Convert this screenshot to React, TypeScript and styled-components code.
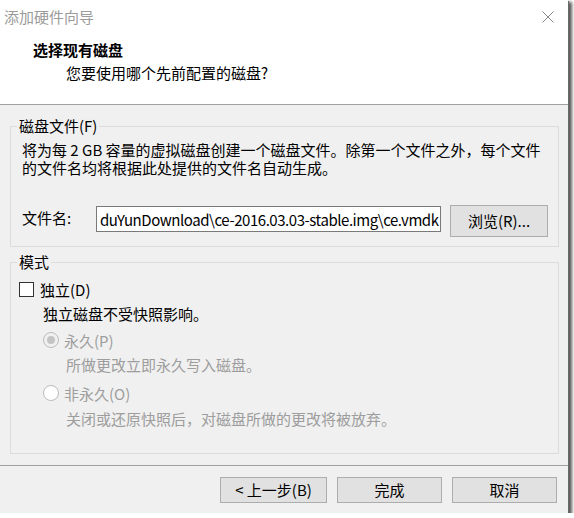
import styled, { createGlobalStyle } from "styled-components";

const GlobalStyle = createGlobalStyle`
    html, body {
        margin: 0;
        padding: 0;
        background: #ffffff;
    }
    body {
        font-family: "Noto Sans CJK SC", "Noto Sans", sans-serif;
        font-size: 15px;
        color: #000;
    }
`;

const Window = styled.div`
    width: 568px;
    height: 513px;
    background: #f0f0f0;
    display: flex;
    flex-direction: column;
    box-shadow: 1px 1px 0 #6a6a6a, 3px 3px 3px 1px rgba(0, 0, 0, 0.65);
`;

const Top = styled.div`
    background: #ffffff;
    height: 104px;
    border-bottom: 1px solid #a0a0a0;
`;

const TitleBar = styled.div`
    height: 33px;
    display: flex;
    align-items: center;
    justify-content: space-between;
    padding: 0 14px 0 4px;
    color: #9b9b9b;
    line-height: 20px;
`;

const Header = styled.div`
    padding: 7px 0 0 33px;

    & h1 {
        margin: 0;
        font-size: 15px;
        font-weight: 700;
        line-height: 20px;
    }

    & p {
        margin: 3px 0 0 33px;
        line-height: 20px;
    }
`;

const Body = styled.div`
    flex: 1;
    display: flex;
    flex-direction: column;
    padding: 11px 9px 11px 10px;
    gap: 5px;
`;

const Group = styled.fieldset<{ $grow?: boolean }>`
    margin: 0;
    border: 1px solid #dcdcdc;
    padding: 0 8px 9px 11px;
    min-width: 0;
    flex: ${(p) => (p.$grow ? 1 : "none")};

    & legend {
        padding: 0 2px;
        margin-left: -5px;
        line-height: 20px;
    }
`;

const Para = styled.div`
    margin-top: 5px;
    line-height: 18px;
`;

const FileRow = styled.div`
    display: flex;
    align-items: flex-start;
    margin-top: 28px;

    & label {
        width: 74px;
        line-height: 26px;
    }
`;

const Field = styled.div`
    box-sizing: border-box;
    width: 345px;
    height: 26px;
    margin-top: 1px;
    background: #ffffff;
    border: 1px solid #7a7a7a;
    display: flex;
    align-items: center;
    padding: 0 3px;
    overflow: hidden;
    white-space: nowrap;
    letter-spacing: -0.45px;
`;

const Button = styled.button<{ $w: number; $h: number }>`
    box-sizing: border-box;
    width: ${(p) => p.$w}px;
    height: ${(p) => p.$h}px;
    background: #e1e1e1;
    border: 1px solid #adadad;
    border-radius: 0;
    font: inherit;
    color: #000;
    padding: 0;
    line-height: 20px;
    white-space: pre;
`;

const BrowseButton = styled(Button)`
    margin-left: 9px;
`;

const Line = styled.div<{ $indent: number; $top: number; $disabled?: boolean }>`
    display: flex;
    align-items: center;
    height: 20px;
    margin-left: ${(p) => p.$indent}px;
    margin-top: ${(p) => p.$top}px;
    color: ${(p) => (p.$disabled ? "#9d9d9d" : "#000")};
    gap: 6px;
`;

const CheckBox = styled.span`
    box-sizing: border-box;
    width: 15px;
    height: 15px;
    background: #ffffff;
    border: 1px solid #333333;
`;

const Radio = styled.span<{ $checked?: boolean }>`
    box-sizing: border-box;
    width: 16px;
    height: 16px;
    border-radius: 50%;
    border: 1px solid #bcbcbc;
    background: ${(p) => (p.$checked ? "#f0f0f0" : "#ffffff")};
    display: flex;
    align-items: center;
    justify-content: center;
    margin-right: -1px;

    &::after {
        content: "";
        display: ${(p) => (p.$checked ? "block" : "none")};
        width: 8px;
        height: 8px;
        border-radius: 50%;
        background: #c4c4c4;
    }
`;

const Footer = styled.div`
    border-top: 1px solid #a0a0a0;
    padding: 11px 11px 0 0;
    height: 36px;
    display: flex;
    justify-content: flex-end;
    gap: 10px;
`;

const CloseIcon = () => (
    <svg width="12" height="12" viewBox="0 0 12 12">
        <path d="M0.5 0.5 L11.5 11.5 M11.5 0.5 L0.5 11.5" stroke="#8a8a8a" strokeWidth="1" />
    </svg>
);

const App = () => {
    return (
        <>
            <GlobalStyle />
            <Window>
                <Top>
                    <TitleBar>
                        <span>添加硬件向导</span>
                        <CloseIcon />
                    </TitleBar>
                    <Header>
                        <h1>选择现有磁盘</h1>
                        <p>您要使用哪个先前配置的磁盘?</p>
                    </Header>
                </Top>

                <Body>
                    <Group>
                        <legend>磁盘文件(F)</legend>
                        <Para>
                            将为每 2 GB 容量的虚拟磁盘创建一个磁盘文件。除第一个文件之外，每个文件
                            <br />
                            的文件名均将根据此处提供的文件名自动生成。
                        </Para>
                        <FileRow>
                            <label>文件名:</label>
                            <Field>duYunDownload\ce-2016.03.03-stable.img\ce.vmdk</Field>
                            <BrowseButton $w={98} $h={32}>浏览(R)...</BrowseButton>
                        </FileRow>
                    </Group>

                    <Group $grow>
                        <legend>模式</legend>
                        <Line $indent={-3} $top={7}>
                            <CheckBox />
                            独立(D)
                        </Line>
                        <Line $indent={21} $top={4}>独立磁盘不受快照影响。</Line>
                        <Line $indent={21} $top={7} $disabled>
                            <Radio $checked />
                            永久(P)
                        </Line>
                        <Line $indent={44} $top={4} $disabled>所做更改立即永久写入磁盘。</Line>
                        <Line $indent={21} $top={9} $disabled>
                            <Radio />
                            非永久(O)
                        </Line>
                        <Line $indent={44} $top={5} $disabled>关闭或还原快照后，对磁盘所做的更改将被放弃。</Line>
                    </Group>
                </Body>

                <Footer>
                    <Button $w={107} $h={26}>{"< 上一步(B)"}</Button>
                    <Button $w={105} $h={26}>完成</Button>
                    <Button $w={105} $h={26}>取消</Button>
                </Footer>
            </Window>
        </>
    );
};

export default App;
